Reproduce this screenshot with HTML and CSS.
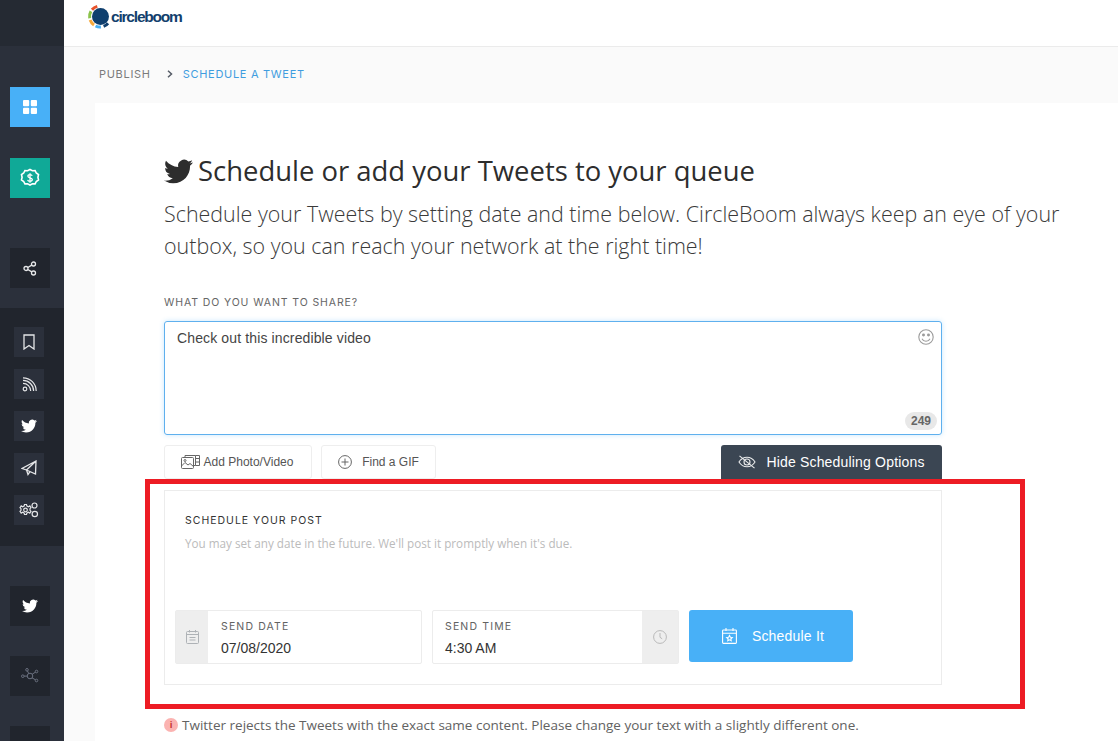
FILE: index.html
```html
<!DOCTYPE html>
<html lang="en">
<head>
  <meta charset="UTF-8">
  <title>Schedule a Tweet - Circleboom</title>
  <link rel="stylesheet" href="styles.css">
</head>
<body>

  <svg class="icon-defs" width="0" height="0">
    <symbol id="bird" viewBox="0 0 24 24">
      <path fill="currentColor" d="M23.953 4.57a10 10 0 01-2.825.775 4.958 4.958 0 002.163-2.723c-.951.555-2.005.959-3.127 1.184a4.92 4.92 0 00-8.384 4.482C7.69 8.095 4.067 6.13 1.64 3.162a4.822 4.822 0 00-.666 2.475c0 1.71.87 3.213 2.188 4.096a4.904 4.904 0 01-2.228-.616v.06a4.923 4.923 0 003.946 4.827 4.996 4.996 0 01-2.212.085 4.936 4.936 0 004.604 3.417 9.867 9.867 0 01-6.102 2.105c-.39 0-.779-.023-1.17-.067a13.995 13.995 0 007.557 2.209c9.053 0 13.998-7.496 13.998-13.985 0-.21 0-.42-.015-.63A9.935 9.935 0 0024 4.59z"/>
    </symbol>
  </svg>

  <div class="layout">

    <aside class="sidebar">
      <div class="side-top"></div>
      <div class="side-btn blue">
        <svg width="14" height="14" viewBox="0 0 14 14" fill="#fff"><rect width="6.2" height="6.2" rx="1"/><rect x="7.8" width="6.2" height="6.2" rx="1"/><rect y="7.8" width="6.2" height="6.2" rx="1"/><rect x="7.8" y="7.8" width="6.2" height="6.2" rx="1"/></svg>
      </div>
      <div class="side-btn teal">
        <svg width="20" height="20" viewBox="0 0 20 20" fill="none" stroke="#fff" stroke-width="1.6"><path d="M10 1.5l2.4 1.3 2.7-.2 1.2 2.4 2.2 1.6-.6 2.7.6 2.6-2.2 1.6-1.2 2.4-2.7-.2-2.4 1.3-2.4-1.3-2.7.2-1.2-2.4-2.2-1.6.6-2.6-.6-2.7 2.2-1.6 1.2-2.4 2.7.2z"/><path stroke-width="1.3" d="M12.2 7.8c-.3-.8-1.1-1.2-2.2-1.2-1.2 0-2.1.6-2.1 1.6 0 2.200 4.400 1.100 4.400 3.400 0 1-1 1.700-2.300 1.700-1.200 0-2.100-.5-2.400-1.400M10 5.200v9.600"/></svg>
      </div>
      <div class="side-btn dark share">
        <svg width="16" height="16" viewBox="0 0 16 16" fill="none" stroke="#e8e9ea" stroke-width="1.300"><circle cx="4" cy="8.500" r="2"/><circle cx="11.500" cy="4" r="2"/><circle cx="11.500" cy="13" r="2"/><path d="M5.800 7.500l4-2.400M5.800 9.500l4 2.400"/></svg>
      </div>

      <div class="side-group">
        <div class="side-small">
          <svg width="14" height="16" viewBox="0 0 14 16" fill="none" stroke="#e4e5e7" stroke-width="1.3"><path d="M2 1h10v14l-5-3.500L2 15z"/></svg>
        </div>
        <div class="side-small">
          <svg width="15" height="15" viewBox="0 0 15 15" fill="none" stroke="#e4e5e7" stroke-width="1.200"><circle cx="3" cy="12" r="1.800"/><path d="M1 6.300a7.700 7.700 0 017.700 7.700M1 3.400A10.600 10.600 0 0111.600 14M1 .8A13.200 13.200 0 0114.200 14"/></svg>
        </div>
        <div class="side-small">
          <svg class="bird-white" width="16" height="16"><use href="#bird"/></svg>
        </div>
        <div class="side-small">
          <svg width="16" height="16" viewBox="0 0 16 16" fill="none" stroke="#e4e5e7" stroke-width="1.300"><path d="M15 1L1 8.500l4.500 1.500L14.500 14zM15 1L5.500 10l1.500 4.500 2-2.800M15 1l-.5 13"/></svg>
        </div>
        <div class="side-small">
          <svg width="20" height="16" viewBox="0 0 20 16" fill="none" stroke="#e4e5e7" stroke-width="1.200"><circle cx="6.500" cy="8" r="1.800"/><path d="M5.500 2.500h2l.4 1.500 1.500.7 1.400-.8 1.200 1.700-1 1.100v1.600l1 1.100-1.200 1.700-1.400-.8-1.500.7-.4 1.500h-2l-.4-1.500-1.500-.7-1.400.8L1 9.400l1-1.100V6.700L1 5.600l1.200-1.700 1.400.8 1.500-.7z"/><circle cx="15.500" cy="3.500" r="2.500"/><circle cx="15.800" cy="12" r="2.700"/></svg>
        </div>
      </div>

      <div class="side-btn dark side-gap">
        <svg class="bird-white" width="16" height="16"><use href="#bird"/></svg>
      </div>
      <div class="side-btn dark">
        <svg width="18" height="16" viewBox="0 0 18 16" fill="none" stroke="#6b7180" stroke-width="1"><circle cx="9" cy="8" r="2.800"/><circle cx="1.800" cy="8.200" r="1.300"/><circle cx="6" cy="1.800" r="1.300"/><circle cx="15.500" cy="3.500" r="1.300"/><circle cx="15.500" cy="12.500" r="1.300"/><path d="M3 8.100h3.200M6.500 3l1.200 2.500M14.400 4.200l-3.200 2M14.400 11.800l-3.400-2"/></svg>
      </div>
      <div class="side-btn dark"></div>
    </aside>

    <div class="content">
      <header class="topbar">
        <div class="logo">
          <svg width="24" height="26" viewBox="0 0 24 26" fill="none" stroke-width="3">
            <circle cx="13.500" cy="12.500" r="8.500" fill="#0f3f6e"/>
            <path d="M4.960 5.750A10.500 10.500 0 0110.280 2.360" stroke="#e8532b"/>
            <path d="M3.900 7.250A10.500 10.500 0 002.660 14.300" stroke="#8bc34a"/>
            <path d="M3.130 16.100A10.500 10.500 0 007 21.100" stroke="#f7a83a"/>
            <path d="M8.560 22A10.500 10.500 0 0013.900 23" stroke="#45aef5"/>
            <path d="M16.600 22.400A10.500 10.500 0 0021 19.200" stroke="#0f3f6e"/>
          </svg>
          <span class="logo-text">circleboom</span>
        </div>
      </header>

      <nav class="crumbs">
        <span class="crumb">PUBLISH</span>
        <svg class="crumb-sep" width="6" height="8" viewBox="0 0 6 8" fill="none" stroke="#555b66" stroke-width="1.500"><path d="M1 .8L4.500 4 1 7.200"/></svg>
        <span class="crumb current">SCHEDULE A TWEET</span>
      </nav>

      <main class="card">
        <h1><svg class="bird-dark" width="29" height="29"><use href="#bird"/></svg>Schedule or add your Tweets to your queue</h1>
        <p class="lead">Schedule your Tweets by setting date and time below. CircleBoom always keep an eye of your outbox, so you can reach your network at the right time!</p>

        <div class="share-label">WHAT DO YOU WANT TO SHARE?</div>
        <div class="composer">
          <span>Check out this incredible video</span>
          <svg class="smile" width="16" height="16" viewBox="0 0 16 16" fill="none" stroke="#9b9b9b" stroke-width="1.100"><circle cx="8" cy="8" r="7.200"/><circle cx="5.500" cy="6" r=".9" fill="#9b9b9b"/><circle cx="10.500" cy="6" r=".9" fill="#9b9b9b"/><path d="M4 9.800c.8 1.700 2.200 2.500 4 2.500s3.200-.8 4-2.500"/></svg>
          <span class="counter">249</span>
        </div>

        <div class="composer-actions">
          <button class="btn-light add-photo">
            <svg width="19" height="16" viewBox="0 0 19 16" fill="none" stroke="#666" stroke-width="1"><rect x=".5" y="3.500" width="12" height="11" rx="1"/><path d="M.5 12l3.500-3.500 3 2.500 2-1.500 3.500 3"/><circle cx="4" cy="6.500" r="1"/><path d="M4 3.500V1.500h10.500v10H12.500M14.500 1.500h4v10h-4M14.500 4.500h4M14.500 8h4"/></svg>
            Add Photo/Video
          </button>
          <button class="btn-light find-gif">
            <svg width="14" height="14" viewBox="0 0 14 14" fill="none" stroke="#666" stroke-width="1"><circle cx="7" cy="7" r="6.400"/><path d="M7 3.500v7M3.500 7h7"/></svg>
            Find a GIF
          </button>
          <button class="btn-hide">
            <svg width="18" height="14" viewBox="0 0 18 14" fill="none" stroke="#e9eaeb" stroke-width="1.100"><path d="M1 7c2-3.200 4.800-4.800 8-4.800s6 1.600 8 4.800c-2 3.200-4.800 4.800-8 4.800S3 10.200 1 7z"/><circle cx="9" cy="7" r="3"/><path d="M1.500.8l15 12.400"/></svg>
            Hide Scheduling Options
          </button>
        </div>

        <section class="schedule-box">
          <div class="schedule-title">SCHEDULE YOUR POST</div>
          <div class="schedule-hint">You may set any date in the future. We'll post it promptly when it's due.</div>

          <div class="schedule-row">
            <div class="field">
              <div class="field-addon date-addon">
                <svg width="13" height="14" viewBox="0 0 13 14" fill="none" stroke="#aeb2b6" stroke-width="1"><rect x=".5" y="1.500" width="12" height="12" rx="1"/><path d="M.5 4.500h12M3.500 0v2.500M9.500 0v2.500M3.500 7.500h6M3.500 10h6"/></svg>
              </div>
              <div class="field-body">
                <div class="field-label">SEND DATE</div>
                <div class="field-value">07/08/2020</div>
              </div>
            </div>
            <div class="field">
              <div class="field-body">
                <div class="field-label">SEND TIME</div>
                <div class="field-value">4:30 AM</div>
              </div>
              <div class="field-addon time-addon">
                <svg width="14" height="14" viewBox="0 0 14 14" fill="none" stroke="#b9b9b9" stroke-width="1"><circle cx="7" cy="7" r="6.400"/><path d="M7 3v4.300l2.200 1.500"/></svg>
              </div>
            </div>
            <button class="btn-schedule">
              <svg width="15" height="16" viewBox="0 0 15 16" fill="none" stroke="#fff" stroke-width="1.100"><rect x=".6" y="2" width="13.800" height="13.400" rx=".8"/><path d="M.6 5.300h13.800M4 0v3M11 0v3M7.500 7.500l.9 1.700 1.900.3-1.400 1.300.3 1.900-1.700-.9-1.700.9.300-1.900-1.400-1.300 1.900-.3z"/></svg>
              Schedule It
            </button>
          </div>
        </section>

        <p class="notice">
          <span class="notice-dot">i</span>
          Twitter rejects the Tweets with the exact same content. Please change your text with a slightly different one.
        </p>
      </main>
    </div>
  </div>

  <!-- red annotation frame -->
  <div class="highlight"></div>

</body>
</html>
```

FILE: styles.css
```css
html, body {
  height: 741px;
  overflow: hidden;
}

body {
  margin: 0;
  font-family: "Liberation Sans", Arial, sans-serif;
  background-color: #fafafa;
}

.icon-defs {
  position: absolute;
}

.bird-white {
  color: #fff;
}

.bird-dark {
  color: #2d2d2d;
  vertical-align: -5px;
  margin-right: 5px;
}

.layout {
  display: flex;
  height: 741px;
}

/* sidebar */
.sidebar {
  width: 64px;
  flex-shrink: 0;
  background-color: #2b303b;
  display: flex;
  flex-direction: column;
}

.side-top {
  height: 46px;
  background-color: #252a33;
  margin-bottom: 41px;
  flex-shrink: 0;
}

.side-btn {
  width: 40px;
  height: 40px;
  margin: 0 0 31px 10px;
  flex-shrink: 0;
  display: flex;
  align-items: center;
  justify-content: center;
}

.side-btn.blue {
  background-color: #48b0f7;
}

.side-btn.teal {
  background-color: #10a997;
  margin-bottom: 50px;
}

.side-btn.dark {
  background-color: #21252d;
  margin-bottom: 30px;
}

.side-btn.share {
  margin-bottom: 20px;
}

.side-group {
  background-color: #21252d;
  padding: 19px 0 21px 14px;
  height: 238px;
  box-sizing: border-box;
  flex-shrink: 0;
  display: flex;
  flex-direction: column;
  gap: 12px;
}

.side-small {
  width: 30px;
  height: 30px;
  background-color: #2b303b;
  flex-shrink: 0;
  display: flex;
  align-items: center;
  justify-content: center;
}

.side-gap {
  margin-top: 40px;
}

/* main column */
.content {
  flex: 1;
  min-width: 0;
  display: flex;
  flex-direction: column;
}

.topbar {
  height: 46px;
  flex-shrink: 0;
  background-color: #fff;
  border-bottom: 1px solid #ebebeb;
  padding-left: 23px;
}

.logo {
  display: flex;
  align-items: center;
  gap: 0;
  height: 33px;
}

.logo-text {
  font-family: "Liberation Sans", Arial, sans-serif;
  font-size: 15.500px;
  font-weight: 700;
  letter-spacing: -1.2px;
  color: #123f6d;
}

.crumbs {
  height: 56px;
  box-sizing: border-box;
  padding-bottom: 2px;
  flex-shrink: 0;
  display: flex;
  align-items: center;
  padding-left: 35px;
  font-family: "Inter", sans-serif;
  font-size: 11px;
  letter-spacing: 0.7px;
}

.crumb {
  color: #7b7b7b;
}

.crumb.current {
  color: #3f9ddf;
}

.crumb-sep {
  margin: 0 10px 0 16px;
}

.card {
  flex: 1;
  margin-left: 31px;
  background-color: #fff;
  padding: 50px 0 0 69px;
}

h1 {
  margin: 0;
  font-family: "Open Sans", sans-serif;
  font-size: 27.450px;
  font-weight: 400;
  line-height: 36px;
  color: #2d2d2d;
}

.lead {
  margin: 9px 0 0;
  width: 905px;
  font-family: "Open Sans", sans-serif;
  font-size: 21.450px;
  font-weight: 300;
  line-height: 32px;
  color: #3a3a3a;
}

.share-label {
  margin-top: 34px;
  font-family: "Inter", sans-serif;
  font-size: 10.500px;
  letter-spacing: 0.9px;
  line-height: 14px;
  color: #666;
}

.composer {
  position: relative;
  width: 778px;
  height: 114px;
  margin-top: 11px;
  box-sizing: border-box;
  padding: 8px 12px;
  border: 1px solid #5fb0ee;
  border-radius: 3px;
  box-shadow: 0 0 5px rgba(72, 176, 247, 0.3);
  font-size: 14px;
  letter-spacing: 0.13px;
  line-height: 16px;
  color: #444;
}

.smile {
  position: absolute;
  top: 7px;
  right: 7px;
}

.counter {
  position: absolute;
  right: 4px;
  bottom: 4px;
  padding: 2px 6px;
  border-radius: 9px;
  background-color: #e8e8e8;
  font-size: 12px;
  font-weight: 700;
  line-height: 14px;
  letter-spacing: 0;
  color: #666;
}

.composer-actions {
  width: 778px;
  display: flex;
  gap: 9px;
  margin-top: 10px;
}

.composer-actions button {
  font-family: "Liberation Sans", Arial, sans-serif;
  display: flex;
  align-items: center;
  cursor: pointer;
}

.btn-light {
  height: 34px;
  background-color: #fff;
  border: 1px solid #eeeeee;
  border-radius: 3px;
  font-size: 12px;
  color: #555;
  justify-content: center;
  padding: 0;
}

.add-photo {
  width: 148px;
  gap: 4px;
  padding-right: 2px;
}

.find-gif {
  width: 115px;
  gap: 10px;
}

.btn-hide {
  margin-left: auto;
  width: 221px;
  height: 35px;
  background-color: #3b4653;
  border: none;
  border-radius: 3px 3px 0 0;
  font-size: 14px;
  letter-spacing: 0.18px;
  color: #fff;
  justify-content: center;
  gap: 10px;
  padding: 0 0 2px;
}

.schedule-box {
  width: 778px;
  height: 195px;
  margin-top: 10px;
  box-sizing: border-box;
  border: 1px solid #ececec;
  padding: 23px 10px 0;
}

.schedule-title {
  margin-left: 10px;
  font-family: "Inter", sans-serif;
  font-size: 10.500px;
  letter-spacing: 1px;
  line-height: 14px;
  color: #333;
}

.schedule-hint {
  margin: 8px 0 0 10px;
  font-family: "Open Sans", sans-serif;
  font-size: 11.700px;
  line-height: 14px;
  color: #bbb;
}

.schedule-row {
  display: flex;
  gap: 10px;
  margin-top: 60px;
}

.field {
  width: 247px;
  height: 54px;
  box-sizing: border-box;
  border: 1px solid #ececec;
  border-radius: 2px;
  display: flex;
}

.field-addon {
  flex-shrink: 0;
  background-color: #eeeeee;
  display: flex;
  align-items: center;
  justify-content: center;
}

.date-addon {
  width: 32px;
}

.time-addon {
  width: 36px;
}

.field-body {
  flex: 1;
  padding: 10px 12px 0;
}

.date-addon + .field-body {
  padding-left: 13px;
}

.field-label {
  font-family: "Inter", sans-serif;
  font-size: 10.500px;
  letter-spacing: 1.150px;
  line-height: 12px;
  color: #626262;
}

.field-value {
  margin-top: 6px;
  font-size: 14px;
  line-height: 18px;
  color: #333;
}

.btn-schedule {
  width: 164px;
  height: 52px;
  background-color: #48b0f7;
  border: none;
  border-radius: 3px;
  font-family: "Liberation Sans", Arial, sans-serif;
  font-size: 14px;
  letter-spacing: 0.2px;
  color: #fff;
  display: flex;
  align-items: center;
  justify-content: center;
  gap: 15px;
  padding: 0 0 0 4px;
  cursor: pointer;
}

.notice {
  margin: 31px 0 0;
  font-family: "Open Sans", sans-serif;
  font-size: 13.500px;
  line-height: 18px;
  color: #626262;
  display: flex;
  align-items: center;
  gap: 4px;
  white-space: nowrap;
}

.notice-dot {
  width: 14px;
  height: 14px;
  border-radius: 50%;
  background-color: #fbb3b1;
  color: #c8352f;
  font-size: 9px;
  font-weight: 700;
  line-height: 14px;
  text-align: center;
}

/* red annotation frame on top of the page */
.highlight {
  position: absolute;
  left: 145px;
  top: 479px;
  width: 870px;
  height: 220px;
  border: 5px solid #ed1c24;
}
```
